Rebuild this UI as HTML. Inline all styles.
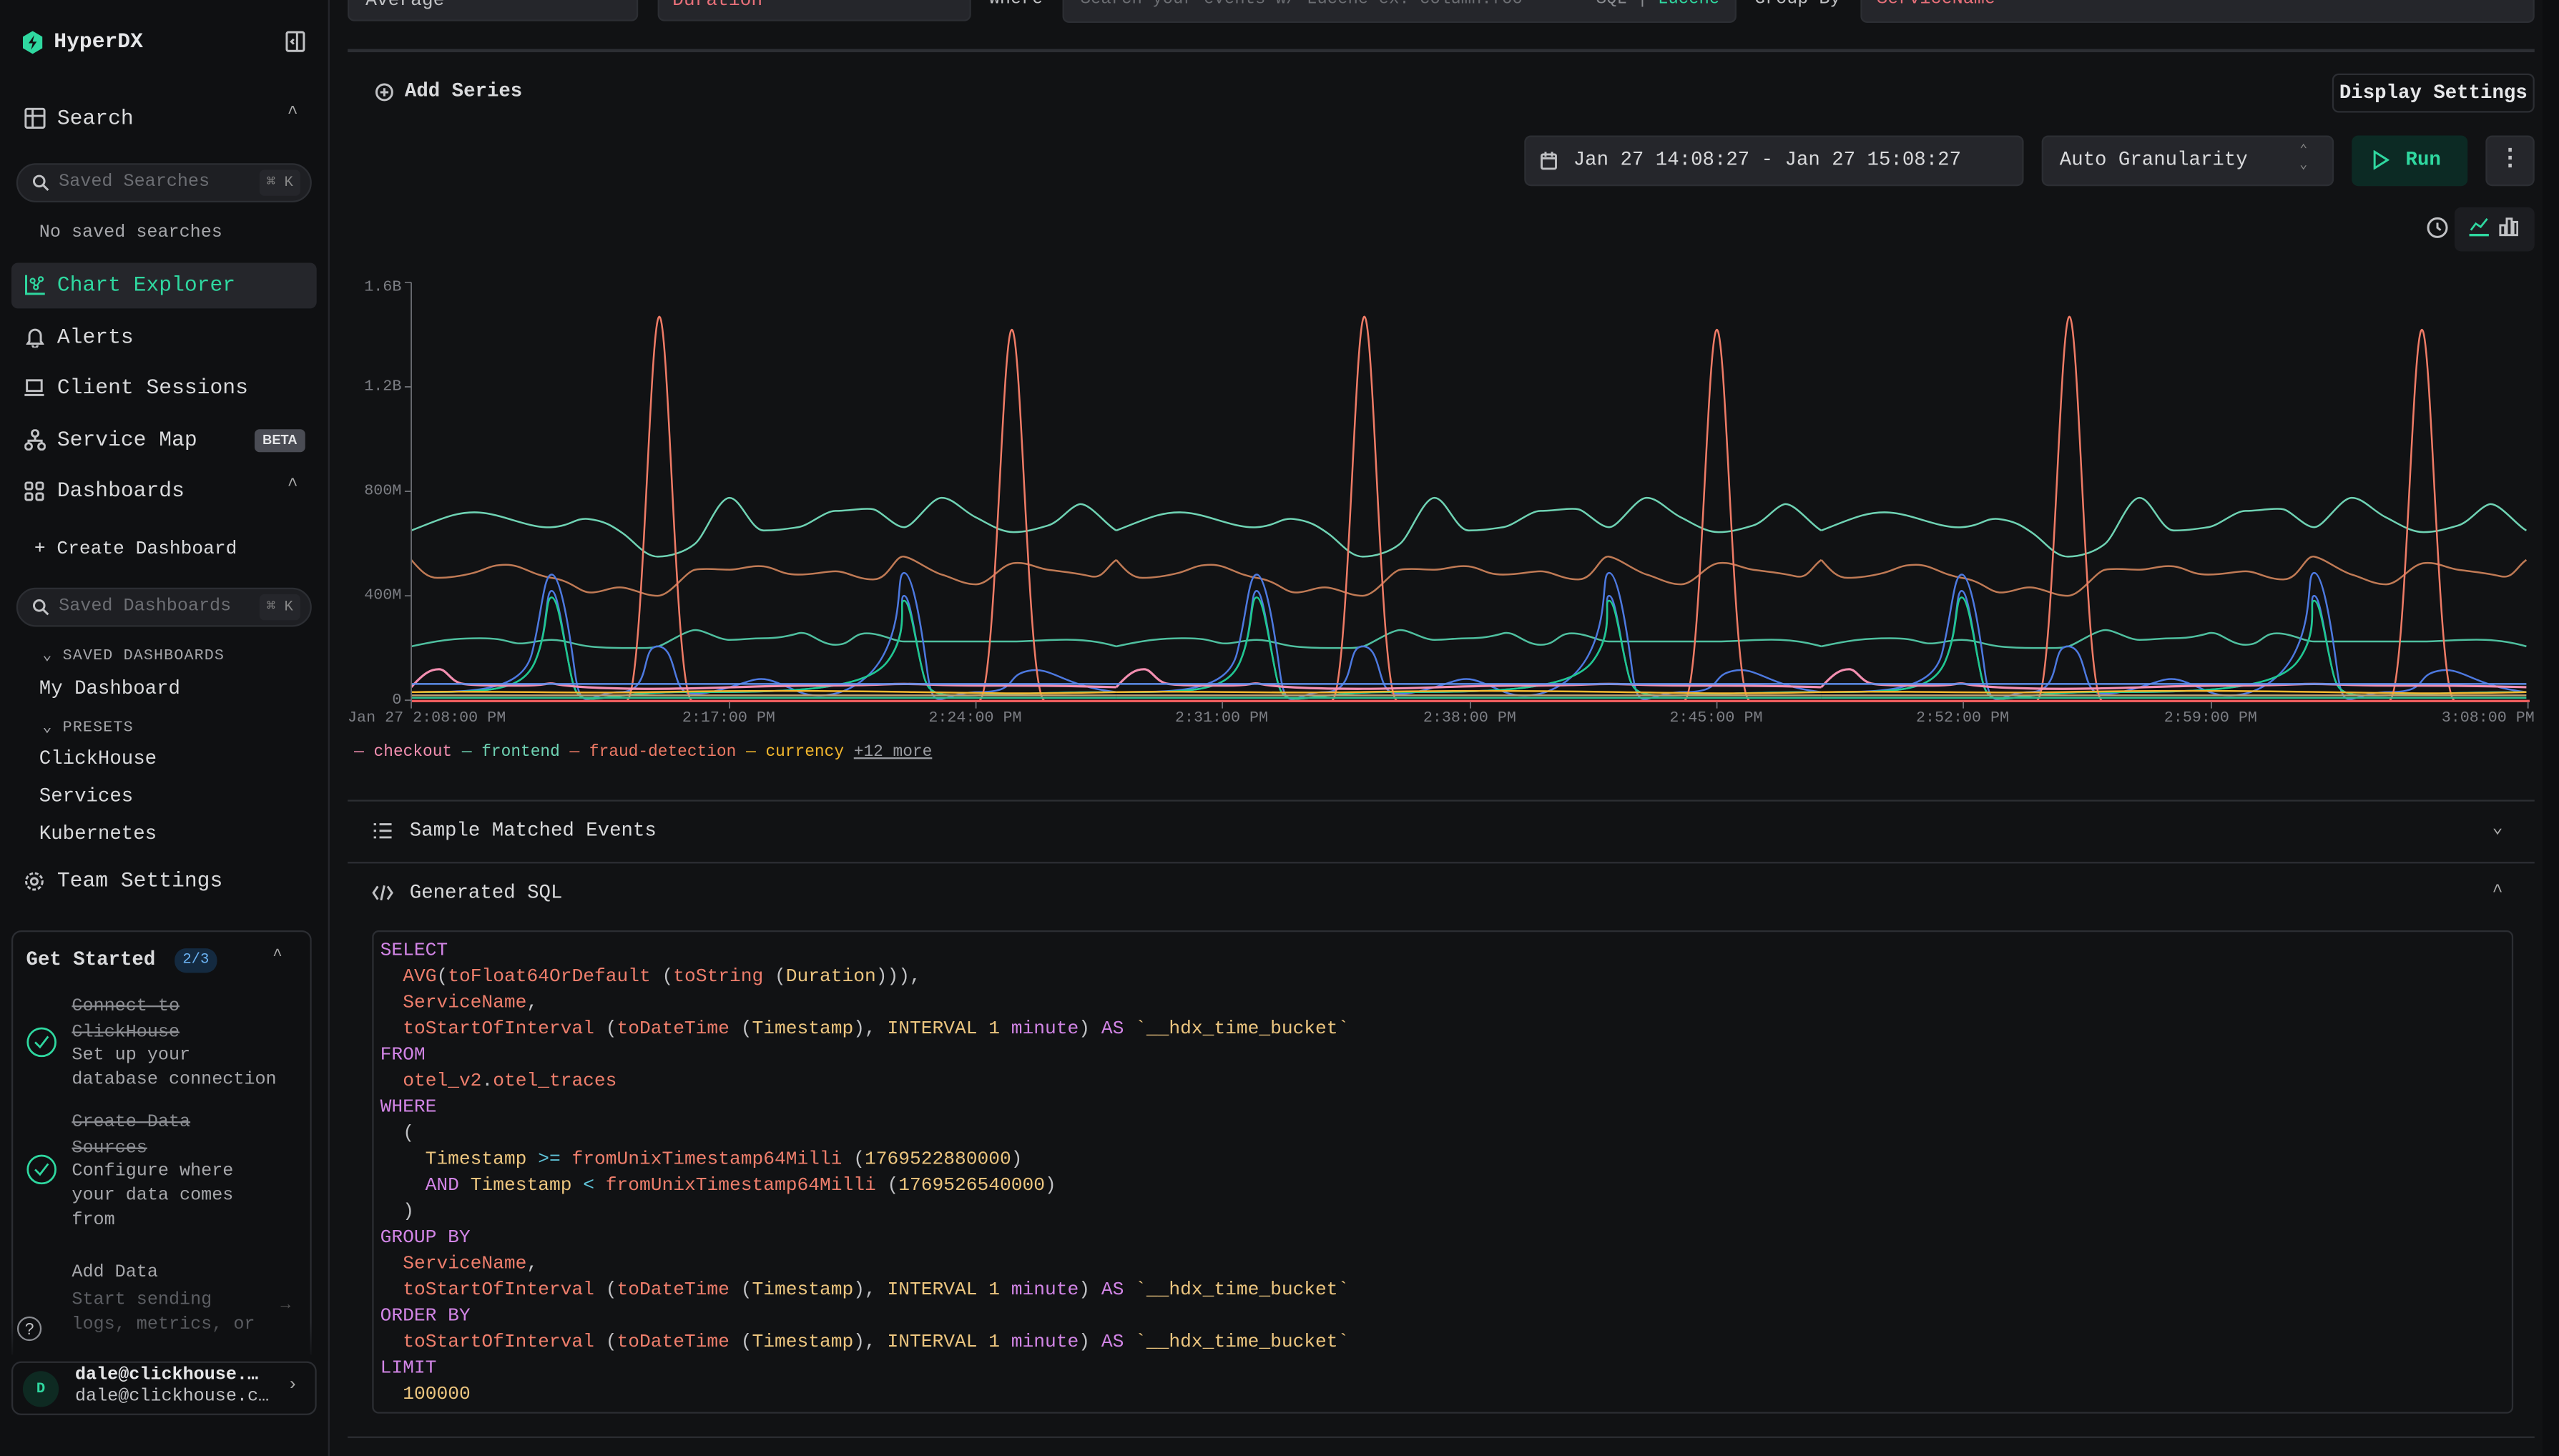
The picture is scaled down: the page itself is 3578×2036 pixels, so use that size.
<!DOCTYPE html>
<html><head><meta charset="utf-8">
<style>
*{box-sizing:border-box;margin:0;padding:0}
html,body{width:3578px;height:2036px;background:#111214;overflow:hidden}
#w{position:absolute;left:0;top:0;width:1568px;height:892px;transform:scale(2.2819,2.2825);transform-origin:0 0;background:#111214;font-family:"Liberation Mono",monospace;color:#d9dadc;overflow:hidden}
.a{position:absolute;white-space:nowrap}
.sb{position:absolute;left:0;top:0;width:202px;height:892px;background:#0f1012;border-right:1px solid #25262b}
.nav{font-size:13px;color:#d9dadc}
.ic{stroke:#c1c2c5;fill:none;stroke-width:1.3}
.box{position:absolute;background:#25262b;border-radius:4px;border:1px solid #2c2e33}
.sq{font-size:11.5px;line-height:16px;white-space:pre}
.k{color:#d285e6}.f{color:#ee7e6c}.y{color:#ecc57f}.p{color:#c1c2c5}.c{color:#5fc3d8}
.hr{position:absolute;height:1px;background:#2c2e33}
.yl{font-size:9.5px;color:#7d7f85;text-align:right;width:40px}
.xl{font-size:9.5px;color:#7d7f85}
</style></head><body><div id="w">

<div class="sb"></div>
<svg class="a" style="left:14px;top:19px" width="12" height="14" viewBox="0 0 12 14"><path d="M6 0L12 3.5V10.5L6 14L0 10.5V3.5Z" fill="#2fd8a0"/><path d="M7 2.5L3.5 7.5H6L5 11.5L8.5 6.5H6Z" fill="#0f1012"/></svg>
<div class="a" style="left:33px;top:18px;font-size:13px;font-weight:bold;color:#e6e7e9">HyperDX</div>
<svg class="a" style="left:175px;top:19px" width="12" height="13"><rect x="0.7" y="0.7" width="10.5" height="11.5" class="ic" rx="1"/><path d="M7 1V12M5 5L3.5 6.5L5 8" class="ic"/></svg>

<svg class="a" style="left:15px;top:66px" width="13" height="13"><rect x="0.7" y="0.7" width="11.5" height="11.5" class="ic" rx="1"/><path d="M1 5H12M5 1V12" class="ic"/></svg>
<div class="a nav" style="left:35px;top:65px">Search</div>
<div class="a" style="left:176px;top:64px;font-size:11px;color:#aaa">^</div>
<div class="a" style="left:10px;top:100px;width:181px;height:24px;border-radius:12px;background:#1e1f23;border:1px solid #2c2e33"></div>
<svg class="a" style="left:20px;top:107px" width="10" height="10"><circle cx="4" cy="4" r="3.2" class="ic" stroke="#8a8c91"/><path d="M6.5 6.5L9.5 9.5" class="ic" stroke="#8a8c91"/></svg>
<div class="a" style="left:36px;top:106px;font-size:11px;color:#6c6e73">Saved Searches</div>
<div class="a" style="left:159px;top:104px;width:25px;height:16px;background:#25262b;border-radius:3px;font-size:9px;color:#888;text-align:center;line-height:16px">⌘ K</div>
<div class="a" style="left:24px;top:137px;font-size:11px;color:#a6a7ab">No saved searches</div>

<div class="a" style="left:7px;top:161px;width:187px;height:28px;background:#25262b;border-radius:4px"></div>
<svg class="a" style="left:15px;top:168px" width="13" height="13"><path d="M1 0.5V12H12.5" stroke="#2fd8a0" fill="none" stroke-width="1.3"/><circle cx="5" cy="4" r="1.3" stroke="#2fd8a0" fill="none"/><circle cx="10" cy="3" r="1.3" stroke="#2fd8a0" fill="none"/><circle cx="7" cy="8" r="1.3" stroke="#2fd8a0" fill="none"/><path d="M5.5 5L6.5 7M7.7 7L9.5 4.2" stroke="#2fd8a0"/></svg>
<div class="a nav" style="left:35px;top:167px;color:#2fd8a0">Chart Explorer</div>

<svg class="a" style="left:16px;top:200px" width="11" height="13"><path d="M2 9V5.5A3.5 3.5 0 0 1 9 5.5V9L10 10.5H1Z M4 11.5A1.5 1.5 0 0 0 7 11.5" class="ic"/></svg>
<div class="a nav" style="left:35px;top:199px">Alerts</div>
<svg class="a" style="left:15px;top:232px" width="12" height="11"><rect x="1.5" y="1" width="9" height="6.5" class="ic"/><path d="M0 10H12" class="ic"/></svg>
<div class="a nav" style="left:35px;top:230px">Client Sessions</div>
<svg class="a" style="left:15px;top:263px" width="13" height="13"><circle cx="6.5" cy="2.5" r="2" class="ic"/><circle cx="2.5" cy="10.5" r="2" class="ic"/><circle cx="10.5" cy="10.5" r="2" class="ic"/><path d="M6.5 4.5V7M2.5 8.5V7H10.5V8.5" class="ic"/></svg>
<div class="a nav" style="left:35px;top:262px">Service Map</div>
<div class="a" style="left:156px;top:263px;width:31px;height:14px;background:#4a4c54;border-radius:3px;font-size:8px;font-weight:bold;color:#e6e7e9;text-align:center;line-height:14px;font-family:'Liberation Sans',sans-serif">BETA</div>
<svg class="a" style="left:15px;top:295px" width="12" height="12"><rect x="0.7" y="0.7" width="4" height="4" class="ic" rx="1"/><rect x="7.3" y="0.7" width="4" height="4" class="ic" rx="1"/><rect x="0.7" y="7.3" width="4" height="4" class="ic" rx="1"/><rect x="7.3" y="7.3" width="4" height="4" class="ic" rx="1"/></svg>
<div class="a nav" style="left:35px;top:293px">Dashboards</div>
<div class="a" style="left:176px;top:292px;font-size:11px;color:#aaa">^</div>
<div class="a" style="left:21px;top:330px;font-size:11.5px;color:#d9dadc">+ Create Dashboard</div>
<div class="a" style="left:10px;top:360px;width:181px;height:24px;border-radius:12px;background:#1e1f23;border:1px solid #2c2e33"></div>
<svg class="a" style="left:20px;top:367px" width="10" height="10"><circle cx="4" cy="4" r="3.2" class="ic" stroke="#8a8c91"/><path d="M6.5 6.5L9.5 9.5" class="ic" stroke="#8a8c91"/></svg>
<div class="a" style="left:36px;top:366px;font-size:11px;color:#6c6e73">Saved Dashboards</div>
<div class="a" style="left:159px;top:364px;width:25px;height:16px;background:#25262b;border-radius:3px;font-size:9px;color:#888;text-align:center;line-height:16px">⌘ K</div>
<div class="a" style="left:26px;top:396px;font-size:9.5px;color:#a6a7ab;letter-spacing:.5px">⌄ SAVED DASHBOARDS</div>
<div class="a" style="left:24px;top:415px;font-size:12px">My Dashboard</div>
<div class="a" style="left:26px;top:440px;font-size:9.5px;color:#a6a7ab;letter-spacing:.5px">⌄ PRESETS</div>
<div class="a" style="left:24px;top:458px;font-size:12px">ClickHouse</div>
<div class="a" style="left:24px;top:481px;font-size:12px">Services</div>
<div class="a" style="left:24px;top:504px;font-size:12px">Kubernetes</div>
<svg class="a" style="left:15px;top:534px" width="12" height="12"><circle cx="6" cy="6" r="2" class="ic"/><circle cx="6" cy="6" r="5" class="ic" stroke-dasharray="2.2 1.2"/></svg>
<div class="a nav" style="left:35px;top:532px">Team Settings</div>

<div class="a" style="left:7px;top:570px;width:184px;height:260px;border:1px solid #2c2e33;border-bottom:none;border-radius:6px 6px 0 0"></div>
<div class="a" style="left:16px;top:581px;font-size:12px;font-weight:bold">Get Started</div>
<div class="a" style="left:107px;top:581px;width:26px;height:15px;background:#142a40;border-radius:7px;font-size:9px;color:#6cb4f5;text-align:center;line-height:15px">2/3</div>
<div class="a" style="left:167px;top:581px;font-size:10px;color:#aaa">^</div>
<div class="a" style="left:44px;top:609px;font-size:11px;line-height:16px;color:#8a8c91;text-decoration:line-through">Connect to<br>ClickHouse</div>
<div class="a" style="left:44px;top:640px;font-size:11px;line-height:15px;color:#a6a7ab">Set up your<br>database connection</div>
<svg class="a" style="left:16px;top:629px" width="19" height="19"><circle cx="9.5" cy="9.5" r="8.5" stroke="#2fd8a0" fill="none" stroke-width="1.2"/><path d="M5.5 9.5L8.5 12.5L13.5 6" stroke="#2fd8a0" fill="none" stroke-width="1.2"/></svg>
<div class="a" style="left:44px;top:680px;font-size:11px;line-height:16px;color:#8a8c91;text-decoration:line-through">Create Data<br>Sources</div>
<div class="a" style="left:44px;top:711px;font-size:11px;line-height:15px;color:#a6a7ab">Configure where<br>your data comes<br>from</div>
<svg class="a" style="left:16px;top:707px" width="19" height="19"><circle cx="9.5" cy="9.5" r="8.5" stroke="#2fd8a0" fill="none" stroke-width="1.2"/><path d="M5.5 9.5L8.5 12.5L13.5 6" stroke="#2fd8a0" fill="none" stroke-width="1.2"/></svg>
<div class="a" style="left:44px;top:774px;font-size:11px;color:#a6a7ab">Add Data</div>
<div class="a" style="left:44px;top:790px;font-size:11px;line-height:15px;color:#5c5e63">Start sending<br>logs, metrics, or</div>
<div class="a" style="left:172px;top:795px;font-size:10px;color:#555">→</div>
<div class="a" style="left:0;top:810px;width:201px;height:24px;background:linear-gradient(rgba(15,16,18,0),#0f1012)"></div>
<svg class="a" style="left:10px;top:806px" width="16" height="16"><circle cx="8" cy="8" r="7" stroke="#8a8c91" fill="#0f1012"/><text x="8" y="11.5" font-size="10" fill="#c1c2c5" text-anchor="middle" font-family="Liberation Sans">?</text></svg>
<div class="a" style="left:7px;top:834px;width:187px;height:33px;border:1px solid #2c2e33;border-radius:6px"></div>
<div class="a" style="left:14px;top:840px;width:22px;height:22px;border-radius:11px;background:#0e2a22;color:#2fd8a0;font-size:9px;font-weight:bold;text-align:center;line-height:22px">D</div>
<div class="a" style="left:46px;top:837px;font-size:11px;font-weight:bold;color:#e6e7e9">dale@clickhouse.…</div>
<div class="a" style="left:46px;top:850px;font-size:11px;color:#c1c2c5">dale@clickhouse.c…</div>
<div class="a" style="left:176px;top:843px;font-size:11px;color:#aaa">›</div>

<div class="box" style="left:213px;top:-12px;width:178px;height:25px"></div>
<div class="a" style="left:224px;top:-6px;font-size:11.5px;color:#c1c2c5">Average</div>
<div class="box" style="left:403px;top:-12px;width:192px;height:25px"></div>
<div class="a" style="left:412px;top:-6px;font-size:11.5px;color:#e8707a">Duration</div>
<div class="a" style="left:606px;top:-6px;font-size:11px;color:#c1c2c5">Where</div>
<div class="box" style="left:651px;top:-12px;width:413px;height:26px"></div>
<div class="a" style="left:662px;top:-6px;font-size:10.5px;color:#6c6e73">Search your events w/ Lucene ex. column:foo</div>
<div class="a" style="left:978px;top:-6px;font-size:10.5px;color:#8a8c91">SQL | <span style="color:#2fd8a0">Lucene</span></div>
<div class="a" style="left:1075px;top:-6px;font-size:11px;color:#c1c2c5">Group By</div>
<div class="box" style="left:1140px;top:-12px;width:413px;height:26px"></div>
<div class="a" style="left:1150px;top:-6px;font-size:11px;color:#e8707a">ServiceName</div>
<div class="hr" style="left:213px;top:30px;width:1340px;height:1.5px"></div>

<svg class="a" style="left:230px;top:51px" width="11" height="11"><circle cx="5.5" cy="5.5" r="4.8" class="ic"/><path d="M5.5 3V8M3 5.5H8" class="ic"/></svg>
<div class="a" style="left:248px;top:49px;font-size:12px;font-weight:bold;color:#d9dadc">Add Series</div>
<div class="a" style="left:1429px;top:45px;width:124px;height:24px;border:1px solid #2c2e33;border-radius:4px;font-size:12px;font-weight:bold;text-align:center;line-height:22px;color:#e6e7e9">Display Settings</div>

<div class="box" style="left:934px;top:83px;width:306px;height:31px"></div>
<svg class="a" style="left:944px;top:93px" width="10" height="11"><rect x="0.6" y="1.6" width="8.8" height="8.8" class="ic" stroke="#8a8c91" rx="1"/><path d="M3 0V3M7 0V3M1 4H9" class="ic" stroke="#8a8c91"/></svg>
<div class="a" style="left:964px;top:91px;font-size:12px;color:#d9dadc">Jan 27 14:08:27 - Jan 27 15:08:27</div>
<div class="box" style="left:1251px;top:83px;width:179px;height:31px"></div>
<div class="a" style="left:1262px;top:91px;font-size:12px;color:#d9dadc">Auto Granularity</div>
<div class="a" style="left:1409px;top:88px;font-size:8px;line-height:9px;color:#888">⌃<br>⌄</div>
<div class="a" style="left:1441px;top:83px;width:71px;height:31px;background:#0c2a24;border-radius:4px"></div>
<svg class="a" style="left:1454px;top:92px" width="10" height="12"><path d="M1 1L9 6L1 11Z" stroke="#2fd8a0" fill="none" stroke-width="1.3"/></svg>
<div class="a" style="left:1474px;top:91px;font-size:12px;font-weight:bold;color:#2fd8a0">Run</div>
<div class="box" style="left:1523px;top:83px;width:30px;height:31px;text-align:center;line-height:28px;font-size:14px;color:#c1c2c5;font-weight:bold">⋮</div>

<svg class="a" style="left:1487px;top:133px" width="13" height="13"><circle cx="6.5" cy="6.5" r="5.7" class="ic"/><path d="M6.5 3.5V6.5L8.5 8" class="ic"/></svg>
<div class="a" style="left:1504px;top:127px;width:49px;height:27px;background:#1c1d21;border-radius:4px"></div>
<svg class="a" style="left:1513px;top:133px" width="13" height="12"><path d="M1 8L4 4L7 6L11 1" stroke="#2fd8a0" fill="none" stroke-width="1.2"/><path d="M0 11H12" stroke="#2fd8a0" stroke-width="1.5"/></svg>
<svg class="a" style="left:1531px;top:133px" width="12" height="12"><rect x="1" y="5" width="3" height="6" class="ic"/><rect x="5" y="1" width="3" height="10" class="ic"/><rect x="9" y="3" width="2.5" height="8" class="ic"/></svg>

<div class="a yl" style="left:206px;top:170px">1.6B</div>
<div class="a yl" style="left:206px;top:231px">1.2B</div>
<div class="a yl" style="left:206px;top:295px">800M</div>
<div class="a yl" style="left:206px;top:359px">400M</div>
<div class="a yl" style="left:206px;top:423px">0</div>
<svg class="a" style="left:0;top:0" width="1568" height="460">
<defs><clipPath id="cp"><rect x="252" y="150" width="1298" height="285"/></clipPath>
<g id="tile" fill="none" stroke-width="1.1">
<path stroke="#6fd3b4" d="M252 325C270 318 280 313 294 314S325 324 338 323S352 317 361 318S375 322 382 327S395 341 403 341S420 338 426 333S440 305 447 305S460 325 468 325S482 324 489 323S505 313 512 313S530 311 535 312S548 323 554 323S570 305 577 305S590 313 598 317S613 326 621 326S635 324 642 322S655 311 661 309S678 322 684 325"/>
<path stroke="#c07a55" d="M252 343C258 350 262 354 268 354S282 353 290 351S300 346 310 346S325 352 338 354S355 363 362 363S375 359 382 360S395 365 403 365S420 350 426 349S440 349 447 349S460 346 468 347S478 352 489 352S505 350 512 350S525 355 535 355S548 340 554 341S570 350 577 352S590 358 598 358S613 346 621 345S635 348 642 349S660 351 668 353S678 347 684 343"/>
<path stroke="#4fc0a0" d="M252 396C270 392 280 391 294 391S310 393 316 394S330 392 338 392S352 395 361 396S380 397 392 397S400 396 403 396S420 386 426 386S440 392 447 392S460 391 468 391S482 390 489 388S502 395 512 395S522 388 531 388S548 393 554 393S600 393 620 393S660 389 684 396"/>
<path stroke="#4d79e0" d="M252 424C290 424 320 424 326 400S333 352 338 352S348 380 352 410S360 424 380 424S392 396 403 396S412 420 420 424S450 420 460 417S475 418 490 424S530 424 542 400S549 351 554 351S564 380 568 410S575 424 600 424S615 414 630 411S650 420 684 424"/>
<path stroke="#4d79e0" d="M252 424C300 424 320 424 328 405S334 362 338 362S345 390 350 414S360 424 420 424S530 424 544 405S550 365 554 365S561 395 566 414S580 424 684 424"/>
<path stroke="#1fc98e" d="M252 424C300 424 320 424 328 405S334 366 338 366S345 390 350 414S360 424 420 424S530 424 544 405S550 368 554 368S561 395 566 414S580 424 684 424"/>
<path stroke="#ef7b66" d="M384 429C394 429 398 194 404 194S414 429 424 429M600 429C610 429 614 202 620 202S630 429 640 429"/>
<path stroke="#f48fb1" stroke-width="1.4" d="M252 421C260 412 264 410 269 410S276 418 284 419S305 420 320 420S335 418 340 419S360 422 400 422S460 420 500 420S540 419 554 419S575 420 600 420S650 420 684 421"/>
<path stroke="#5b8de8" d="M252 419H684"/>
<path stroke="#f5b82e" d="M252 424C300 423 350 425 400 424S500 423 560 424S640 425 684 424"/>
<path stroke="#c0a070" d="M252 426H684"/>
<path stroke="#2fbf8f" d="M252 427.5H684"/>
</g></defs>
<g clip-path="url(#cp)"><use href="#tile"/><use href="#tile" x="432"/><use href="#tile" x="864"/></g>
<path d="M252 429.5H1550" stroke="#ef5f5f" stroke-width="1.5"/>
<path d="M252 173V430M248 173H252M248 237H252M248 301H252M248 365H252M248 429H252" stroke="#6c6e73" stroke-width="0.8" fill="none"/>
<path d="M252 430V434M447 430V434M598 430V434M749 430V434M901 430V434M1052 430V434M1203 430V434M1355 430V434M1549 430V434" stroke="#6c6e73" stroke-width="0.8"/>
</svg>
<div class="a xl" style="left:213px;top:434px">Jan 27 2:08:00 PM</div>
<div class="a xl" style="left:418px;top:434px">2:17:00 PM</div>
<div class="a xl" style="left:569px;top:434px">2:24:00 PM</div>
<div class="a xl" style="left:720px;top:434px">2:31:00 PM</div>
<div class="a xl" style="left:872px;top:434px">2:38:00 PM</div>
<div class="a xl" style="left:1023px;top:434px">2:45:00 PM</div>
<div class="a xl" style="left:1174px;top:434px">2:52:00 PM</div>
<div class="a xl" style="left:1326px;top:434px">2:59:00 PM</div>
<div class="a xl" style="left:1496px;top:434px">3:08:00 PM</div>
<div class="a" style="left:217px;top:456px;font-size:10px"><span style="color:#f48fb1">— checkout</span> <span style="color:#6fd3b4">— frontend</span> <span style="color:#ef7b66">— fraud-detection</span> <span style="color:#f5b82e">— currency</span> <span style="color:#9a9ca1;text-decoration:underline">+12 more</span></div>

<div class="hr" style="left:213px;top:490px;width:1340px"></div>
<svg class="a" style="left:229px;top:504px" width="11" height="10"><path d="M0 1H1.5M3.5 1H11M0 5H1.5M3.5 5H11M0 9H1.5M3.5 9H11" class="ic"/></svg>
<div class="a" style="left:251px;top:502px;font-size:12px;color:#d9dadc">Sample Matched Events</div>
<div class="a" style="left:1527px;top:500px;font-size:11px;color:#aaa">⌄</div>
<div class="hr" style="left:213px;top:528px;width:1340px"></div>
<svg class="a" style="left:228px;top:542px" width="13" height="10"><path d="M3.5 1L0.8 5L3.5 9M9.5 1L12.2 5L9.5 9M7.5 0.5L5.5 9.5" class="ic"/></svg>
<div class="a" style="left:251px;top:540px;font-size:12px;color:#d9dadc">Generated SQL</div>
<div class="a" style="left:1527px;top:541px;font-size:11px;color:#aaa">^</div>
<div class="a" style="left:228px;top:570px;width:1312px;height:296px;border:1px solid #2c2e33;border-radius:4px"></div>
<pre class="a sq" style="left:233px;top:575px;font-family:'Liberation Mono',monospace;white-space:pre"><span class="k">SELECT</span>
  <span class="f">AVG</span><span class="p">(</span><span class="f">toFloat64OrDefault</span> <span class="p">(</span><span class="f">toString</span> <span class="p">(</span><span class="y">Duration</span><span class="p">))),</span>
  <span class="f">ServiceName</span><span class="p">,</span>
  <span class="f">toStartOfInterval</span> <span class="p">(</span><span class="f">toDateTime</span> <span class="p">(</span><span class="y">Timestamp</span><span class="p">),</span> <span class="y">INTERVAL</span> <span class="y">1</span> <span class="k">minute</span><span class="p">)</span> <span class="k">AS</span> <span class="y">`__hdx_time_bucket`</span>
<span class="k">FROM</span>
  <span class="f">otel_v2</span><span class="p">.</span><span class="f">otel_traces</span>
<span class="k">WHERE</span>
  <span class="p">(</span>
    <span class="y">Timestamp</span> <span class="c">&gt;=</span> <span class="f">fromUnixTimestamp64Milli</span> <span class="p">(</span><span class="y">1769522880000</span><span class="p">)</span>
    <span class="k">AND</span> <span class="y">Timestamp</span> <span class="c">&lt;</span> <span class="f">fromUnixTimestamp64Milli</span> <span class="p">(</span><span class="y">1769526540000</span><span class="p">)</span>
  <span class="p">)</span>
<span class="k">GROUP BY</span>
  <span class="f">ServiceName</span><span class="p">,</span>
  <span class="f">toStartOfInterval</span> <span class="p">(</span><span class="f">toDateTime</span> <span class="p">(</span><span class="y">Timestamp</span><span class="p">),</span> <span class="y">INTERVAL</span> <span class="y">1</span> <span class="k">minute</span><span class="p">)</span> <span class="k">AS</span> <span class="y">`__hdx_time_bucket`</span>
<span class="k">ORDER BY</span>
  <span class="f">toStartOfInterval</span> <span class="p">(</span><span class="f">toDateTime</span> <span class="p">(</span><span class="y">Timestamp</span><span class="p">),</span> <span class="y">INTERVAL</span> <span class="y">1</span> <span class="k">minute</span><span class="p">)</span> <span class="k">AS</span> <span class="y">`__hdx_time_bucket`</span>
<span class="k">LIMIT</span>
  <span class="y">100000</span></pre>
<div class="hr" style="left:213px;top:880px;width:1340px"></div>
<div class="a" style="left:1558px;top:0;width:10px;height:892px;background:#0d0e10"></div>
</div></body></html>
